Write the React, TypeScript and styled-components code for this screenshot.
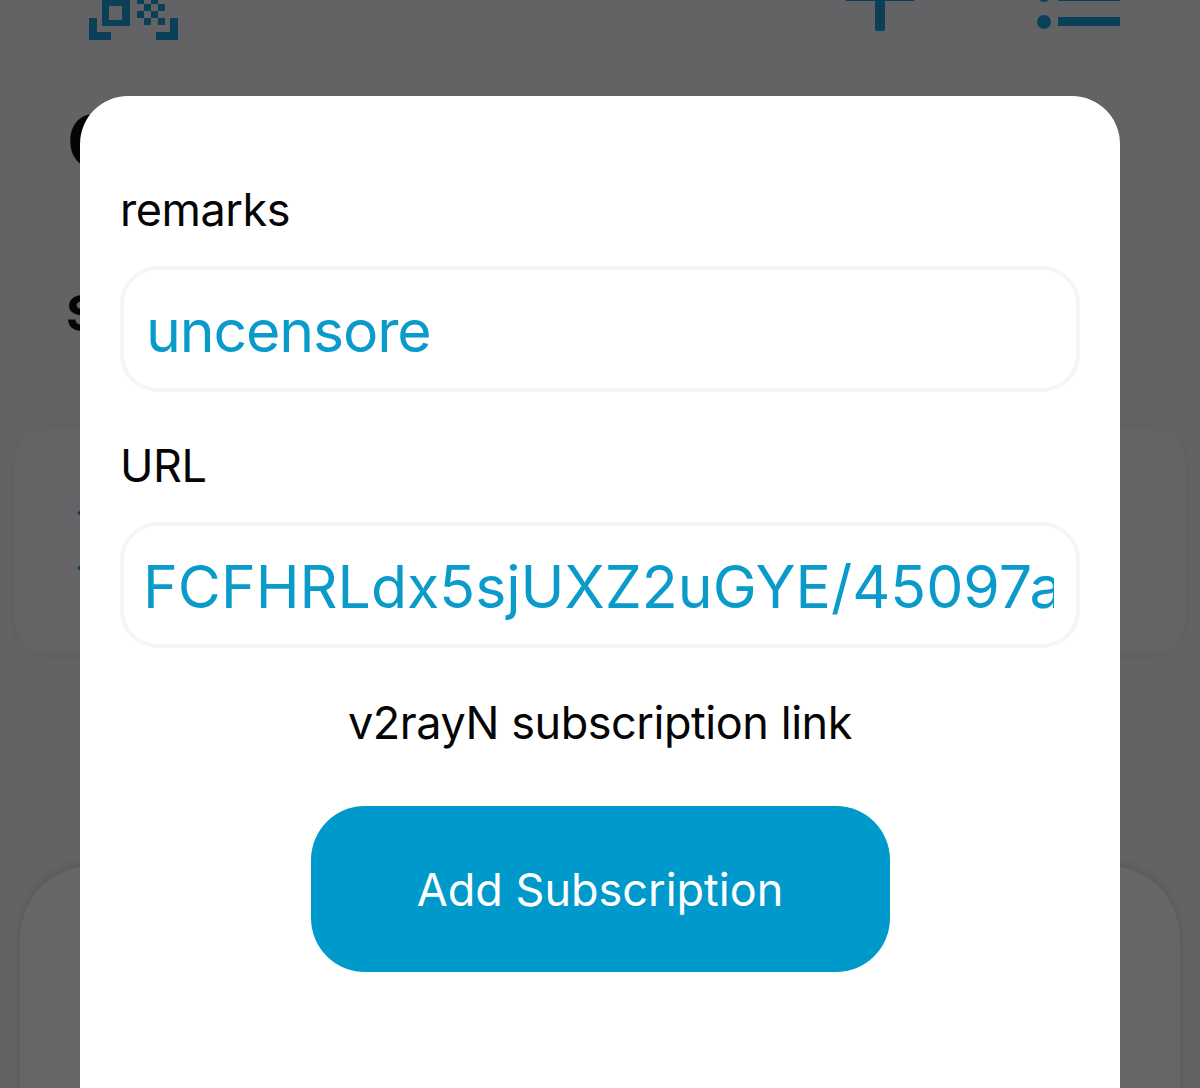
import { createGlobalStyle, styled } from "styled-components";

const GlobalStyle = createGlobalStyle`
  html, body {
    margin: 0;
    padding: 0;
    background: #636365;
  }
  * {
    box-sizing: border-box;
  }
`;

const Page = styled.div`
  position: relative;
  width: 1200px;
  height: 1088px;
  overflow: hidden;
  background: #636365;
  font-family: Inter, "Liberation Sans", Arial, sans-serif;
`;

const Header = styled.header`
  display: flex;
  align-items: flex-start;
  height: 40px;
  padding: 0 80px 0 89px;
`;

const HeaderActions = styled.div`
  display: flex;
  align-items: flex-start;
  gap: 122px;
  margin-left: auto;
`;

const Title = styled.h1`
  margin: 59px 0 0 67px;
  font-size: 72px;
  line-height: 84px;
  font-weight: 700;
  color: #050505;
`;

const SectionTitle = styled.h2`
  margin: 101px 0 0 66px;
  font-size: 50px;
  line-height: 58px;
  font-weight: 700;
  color: #050505;
`;

const ServerCard = styled.section`
  display: flex;
  flex-direction: column;
  gap: 45px;
  height: 225px;
  margin: 86px 15px 0;
  padding: 80px 0 0 62px;
  background: #646466;
  border-radius: 30px;
  box-shadow: 0 2px 6px rgba(0, 0, 0, 0.06);
`;

const Arrow = styled.span`
  width: 0;
  height: 0;
  border-top: 5px solid transparent;
  border-bottom: 5px solid transparent;
  border-right: 6px solid #0a4058;
`;

const BottomSheet = styled.div`
  height: 300px;
  margin: 213px 20px 0;
  background: #666668;
  border-radius: 72px 72px 0 0;
  box-shadow: 0 -3px 8px rgba(0, 0, 0, 0.1);
`;

const Dialog = styled.form`
  position: absolute;
  top: 96px;
  left: 80px;
  width: 1040px;
  height: 1100px;
  display: flex;
  flex-direction: column;
  padding: 84px 40px 0;
  background: #ffffff;
  border-radius: 48px;
`;

const FieldLabel = styled.label`
  display: block;
  font-size: 45px;
  line-height: 60px;
  letter-spacing: -0.45px;
  color: #050505;
`;

const FieldInput = styled.input<{ $long?: boolean }>`
  display: block;
  width: 100%;
  height: 126px;
  margin: 26px 0 44px;
  padding: 3px 22px 0 ${(p) => (p.$long ? "19px" : "22px")};
  border: 4px solid #f5f5f6;
  border-radius: 38px;
  outline: none;
  background: #ffffff;
  color: #0a9bcb;
  font-family: inherit;
  font-size: 59px;
  letter-spacing: ${(p) => (p.$long ? "0" : "-1.15px")};
`;

const Hint = styled.p`
  margin: 1px 0 0;
  text-align: center;
  font-size: 45px;
  line-height: 60px;
  letter-spacing: -0.45px;
  color: #050505;
`;

const SubmitButton = styled.button`
  align-self: center;
  width: 579px;
  height: 166px;
  margin-top: 53px;
  border: none;
  border-radius: 54px;
  background: #0099cc;
  color: #ffffff;
  font-family: inherit;
  font-size: 45px;
`;

const ICON_COLOR = "#0a4058";

// checker cells of the little qr block, in 7px steps
const qrCells = [
  [137, -3], [151, -3], [144, 4], [158, 4], [137, 11], [151, 11], [144, 18], [158, 18],
];

function ScanIcon() {
  return (
    <svg width="89" height="40" viewBox="89 0 89 40" fill={ICON_COLOR}>
      <path d="M89 18h8v14h14v8H89zM178 18h-8v14h-14v8h22z" />
      <path fillRule="evenodd" d="M102 -8h28v34h-28zM109 6v14h13V6z" />
      {qrCells.map(([x, y]) => (
        <rect key={`${x}-${y}`} x={x} y={y} width="7" height="7" />
      ))}
    </svg>
  );
}

function PlusIcon() {
  return (
    <svg width="70" height="31" viewBox="0 0 70 31" fill={ICON_COLOR}>
      <rect x="30" y="-10" width="10" height="41" rx="2" />
      <rect x="0" y="-8" width="70" height="9" rx="2" />
    </svg>
  );
}

function ListIcon() {
  return (
    <svg width="83" height="29" viewBox="0 0 83 29" fill={ICON_COLOR}>
      <circle cx="7" cy="-5" r="7" />
      <rect x="21" y="-8" width="62" height="9" />
      <circle cx="7" cy="22" r="7" />
      <rect x="21" y="17" width="62" height="9" />
    </svg>
  );
}

export default function App() {
  return (
    <Page>
      <GlobalStyle />
      <Header>
        <ScanIcon />
        <HeaderActions>
          <PlusIcon />
          <ListIcon />
        </HeaderActions>
      </Header>
      <Title>C</Title>
      <SectionTitle>S</SectionTitle>
      <ServerCard>
        <Arrow />
        <Arrow />
      </ServerCard>
      <BottomSheet />
      <Dialog>
        <FieldLabel htmlFor="remarks">remarks</FieldLabel>
        <FieldInput id="remarks" readOnly value="uncensore" />
        <FieldLabel htmlFor="url">URL</FieldLabel>
        <FieldInput id="url" $long readOnly value="FCFHRLdx5sjUXZ2uGYE/45097a" />
        <Hint>v2rayN subscription link</Hint>
        <SubmitButton type="button">Add Subscription</SubmitButton>
      </Dialog>
    </Page>
  );
}
